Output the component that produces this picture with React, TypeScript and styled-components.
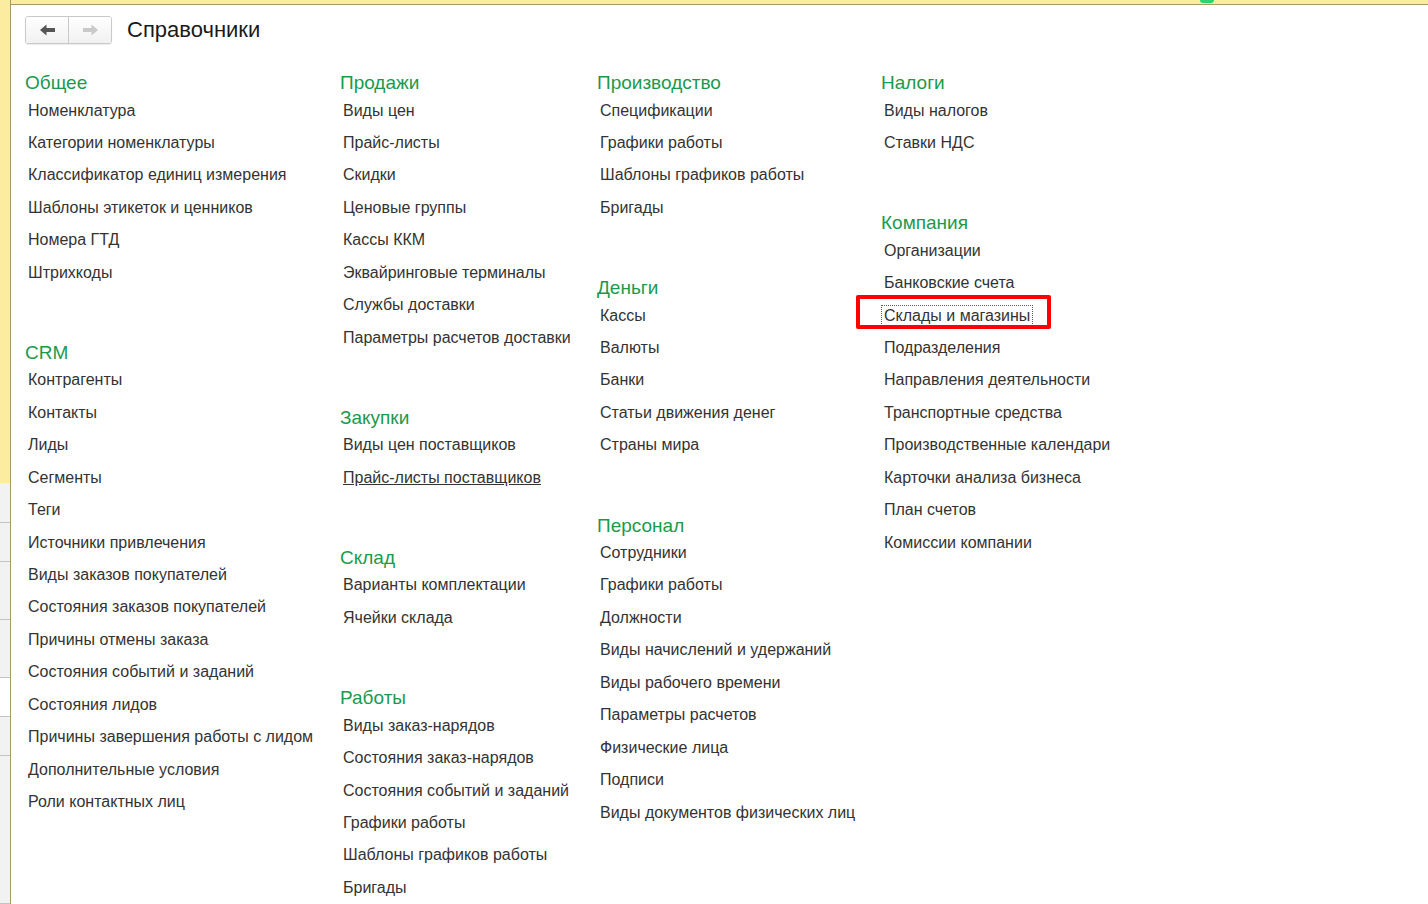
import React from 'react';
import styled, { createGlobalStyle } from 'styled-components';

const GlobalStyle = createGlobalStyle`
  html, body {
    margin: 0;
    padding: 0;
    background: #ffffff;
  }
  body {
    font-family: "Liberation Sans", Arial, sans-serif;
  }
`;

const Frame = styled.div`
  display: flex;
  width: 1428px;
  height: 904px;
  overflow: hidden;
  background: #ffffff;
`;

const SideStrip = styled.div`
  width: 10px;
  flex-shrink: 0;
  border-right: 1px solid #a29b62;
  display: flex;
  flex-direction: column;
`;

const StripCell = styled.div<{ $h?: number; $tone: 'yellow' | 'gray' | 'white' }>`
  height: ${(p) => (p.$h ? `${p.$h}px` : 'auto')};
  flex: ${(p) => (p.$h ? '0 0 auto' : '1 1 auto')};
  background: ${(p) =>
    p.$tone === 'yellow' ? '#fcec9f' : p.$tone === 'white' ? '#ffffff' : '#f2f2f2'};
  border-bottom: ${(p) => (p.$tone === 'yellow' ? 'none' : '1px solid #c4c4c4')};
  box-sizing: border-box;
`;

const Main = styled.div`
  flex: 1;
  display: flex;
  flex-direction: column;
  position: relative;
`;

const TopBand = styled.div`
  height: 4px;
  background: #fcec9f;
  border-bottom: 1px solid #a29b62;
  flex-shrink: 0;
`;

const Busy = styled.div`
  position: absolute;
  top: 0;
  left: 1189px;
  width: 14px;
  height: 3px;
  border-radius: 0 0 7px 7px;
  background: #2ed36b;
`;

const Header = styled.div`
  display: flex;
  align-items: center;
  gap: 15px;
  padding: 11px 0 0 14px;
  height: 28px;
`;

const NavGroup = styled.div`
  display: flex;
  border: 1px solid #c9c9c9;
  border-radius: 3px;
  overflow: hidden;
  box-shadow: 0 1px 1px rgba(0, 0, 0, 0.08);
`;

const NavButton = styled.div`
  width: 42px;
  height: 26px;
  display: flex;
  align-items: center;
  justify-content: center;
  background: linear-gradient(#ffffff, #f1f1f1);
  & + & {
    border-left: 1px solid #c9c9c9;
  }
`;

const Title = styled.div`
  font-size: 22px;
  color: #1a1a1a;
  line-height: 28px;
`;

const Columns = styled.div`
  display: flex;
  padding: 26px 0 0 14px;
`;

const Column = styled.div<{ $w: number; $inset?: number }>`
  width: ${(p) => p.$w}px;
  flex-shrink: 0;
  display: flex;
  flex-direction: column;
  gap: 50.8px;
`;

const Group = styled.div`
  display: flex;
  flex-direction: column;
`;

const GroupTitle = styled.div`
  font-size: 19px;
  line-height: 25px;
  height: 25px;
  margin-bottom: -0.5px;
  color: #1b9a4c;
  white-space: nowrap;
`;

const Item = styled.div<{ $underline?: boolean }>`
  position: relative;
  font-size: 16px;
  line-height: 32.45px;
  height: 32.45px;
  padding-left: 3px;
  color: #333333;
  white-space: nowrap;
  text-decoration: ${(p) => (p.$underline ? 'underline' : 'none')};
`;

const Focused = styled.span`
  outline: 1px dotted #5a5a5a;
  outline-offset: 1px;
  padding: 0 1px;
  margin-left: -1px;
`;

const Highlight = styled.div`
  position: absolute;
  left: -25px;
  top: -5px;
  width: 187px;
  height: 26px;
  border: 4px solid #ff0000;
  border-radius: 2px;
  pointer-events: none;
`;

const Arrow = ({ dir, color }: { dir: 'left' | 'right'; color: string }) => (
  <svg width="17" height="12" viewBox="0 0 17 12">
    <path
      d="M1 6 L7.5 0.5 V4 H16 V8 H7.5 V11.5 Z"
      fill={color}
      transform={dir === 'right' ? 'translate(17 0) scale(-1 1)' : undefined}
    />
  </svg>
);

type Entry = string | { text: string; underline?: boolean; focused?: boolean };
type GroupData = { title: string; items: Entry[] };

const columns: { width: number; groups: GroupData[] }[] = [
  {
    width: 315,
    groups: [
      {
        title: 'Общее',
        items: [
          'Номенклатура',
          'Категории номенклатуры',
          'Классификатор единиц измерения',
          'Шаблоны этикеток и ценников',
          'Номера ГТД',
          'Штрихкоды',
        ],
      },
      {
        title: 'CRM',
        items: [
          'Контрагенты',
          'Контакты',
          'Лиды',
          'Сегменты',
          'Теги',
          'Источники привлечения',
          'Виды заказов покупателей',
          'Состояния заказов покупателей',
          'Причины отмены заказа',
          'Состояния событий и заданий',
          'Состояния лидов',
          'Причины завершения работы с лидом',
          'Дополнительные условия',
          'Роли контактных лиц',
        ],
      },
    ],
  },
  {
    width: 257,
    groups: [
      {
        title: 'Продажи',
        items: [
          'Виды цен',
          'Прайс-листы',
          'Скидки',
          'Ценовые группы',
          'Кассы ККМ',
          'Эквайринговые терминалы',
          'Службы доставки',
          'Параметры расчетов доставки',
        ],
      },
      {
        title: 'Закупки',
        items: ['Виды цен поставщиков', { text: 'Прайс-листы поставщиков', underline: true }],
      },
      { title: 'Склад', items: ['Варианты комплектации', 'Ячейки склада'] },
      {
        title: 'Работы',
        items: [
          'Виды заказ-нарядов',
          'Состояния заказ-нарядов',
          'Состояния событий и заданий',
          'Графики работы',
          'Шаблоны графиков работы',
          'Бригады',
        ],
      },
    ],
  },
  {
    width: 284,
    groups: [
      {
        title: 'Производство',
        items: ['Спецификации', 'Графики работы', 'Шаблоны графиков работы', 'Бригады'],
      },
      {
        title: 'Деньги',
        items: ['Кассы', 'Валюты', 'Банки', 'Статьи движения денег', 'Страны мира'],
      },
      {
        title: 'Персонал',
        items: [
          'Сотрудники',
          'Графики работы',
          'Должности',
          'Виды начислений и удержаний',
          'Виды рабочего времени',
          'Параметры расчетов',
          'Физические лица',
          'Подписи',
          'Виды документов физических лиц',
        ],
      },
    ],
  },
  {
    width: 300,
    groups: [
      { title: 'Налоги', items: ['Виды налогов', 'Ставки НДС'] },
      {
        title: 'Компания',
        items: [
          'Организации',
          'Банковские счета',
          { text: 'Склады и магазины', focused: true },
          'Подразделения',
          'Направления деятельности',
          'Транспортные средства',
          'Производственные календари',
          'Карточки анализа бизнеса',
          'План счетов',
          'Комиссии компании',
        ],
      },
    ],
  },
];

const renderEntry = (entry: Entry, i: number) => {
  if (typeof entry === 'string') return <Item key={i}>{entry}</Item>;
  return (
    <Item key={i} $underline={entry.underline}>
      {entry.focused ? <Focused>{entry.text}</Focused> : entry.text}
      {entry.focused && <Highlight />}
    </Item>
  );
};

export default function App() {
  return (
    <Frame>
      <GlobalStyle />
      <SideStrip>
        <StripCell $tone="yellow" $h={483} />
        <StripCell $tone="gray" $h={40} />
        <StripCell $tone="gray" $h={39} />
        <StripCell $tone="gray" $h={58} />
        <StripCell $tone="gray" $h={58} />
        <StripCell $tone="white" $h={39} />
        <StripCell $tone="gray" $h={39} />
        <StripCell $tone="gray" />
      </SideStrip>
      <Main>
        <TopBand />
        <Busy />
        <Header>
          <NavGroup>
            <NavButton>
              <Arrow dir="left" color="#555555" />
            </NavButton>
            <NavButton>
              <Arrow dir="right" color="#c9c9c9" />
            </NavButton>
          </NavGroup>
          <Title>Справочники</Title>
        </Header>
        <Columns>
          {columns.map((col, ci) => (
            <Column key={ci} $w={col.width}>
              {col.groups.map((g) => (
                <Group key={g.title}>
                  <GroupTitle>{g.title}</GroupTitle>
                  {g.items.map(renderEntry)}
                </Group>
              ))}
            </Column>
          ))}
        </Columns>
      </Main>
    </Frame>
  );
}
